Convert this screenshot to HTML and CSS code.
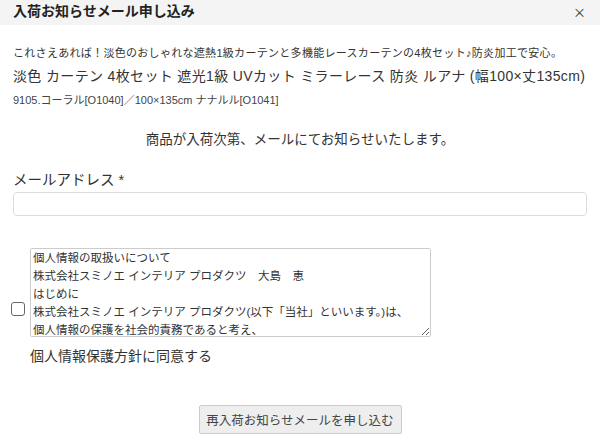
FILE: index.html
```html
<!DOCTYPE html>
<html lang="ja">
<head>
<meta charset="utf-8">
<link rel="stylesheet" href="styles.css">
</head>
<body>
<div class="modal">
  <div class="header">
    <div class="title">入荷お知らせメール申し込み</div>
    <div class="close">×</div>
  </div>
  <div class="body">
    <p class="catch">これさえあれば！淡色のおしゃれな遮熱1級カーテンと多機能レースカーテンの4枚セット♪防炎加工で安心。</p>
    <p class="name">淡色 カーテン 4枚セット 遮光1級 UVカット ミラーレース 防炎 ルアナ (幅100×丈135cm)</p>
    <p class="variant">9105.コーラル[O1040]／100×135cm ナナルル[O1041]</p>
    <p class="notice">商品が入荷次第、メールにてお知らせいたします。</p>
    <label class="label">メールアドレス *</label>
    <input class="input" type="text">
    <div class="agree">
      <input class="check" type="checkbox">
      <textarea class="policy" readonly>個人情報の取扱いについて
株式会社スミノエ インテリア プロダクツ　大島　恵
はじめに
株式会社スミノエ インテリア プロダクツ(以下「当社」といいます。)は、
個人情報の保護を社会的責務であると考え、
個人情報に関する法令およびその他の規範を遵守し、</textarea>
    </div>
    <p class="agree-text">個人情報保護方針に同意する</p>
    <div class="actions">
      <button class="submit" type="button">再入荷お知らせメールを申し込む</button>
    </div>
  </div>
</div>
</body>
</html>
```
FILE: styles.css
```css
* { box-sizing: border-box; }
html, body { margin: 0; padding: 0; background: #fff; }
body {
  font-family: "Liberation Sans", "Noto Sans CJK JP", sans-serif;
  color: #333;
  width: 600px;
  height: 443px;
  overflow: hidden;
}
.header {
  display: flex;
  align-items: center;
  justify-content: space-between;
  height: 25px;
  background: #f4f4f4;
  padding: 0 14px 0 13px;
}
.title {
  font-size: 14px;
  font-weight: bold;
  color: #222;
  line-height: 20px;
  margin-top: -4px;
}
.close {
  font-family: "Noto Sans CJK JP", sans-serif;
  font-size: 13px;
  color: #333;
  margin-top: -3px;
}
.body {
  padding: 0 13px;
}
p { margin: 0; }
.catch {
  font-size: 11px;
  line-height: 16px;
  margin-top: 20px;
  color: #333;
  letter-spacing: 0.3px;
  white-space: nowrap;
}
.name {
  font-size: 14px;
  line-height: 20px;
  margin-top: 5px;
  color: #333;
  white-space: nowrap;
  letter-spacing: 0.35px;
}
.variant {
  font-size: 11px;
  line-height: 16px;
  margin-top: 6px;
  color: #444;
}
.notice {
  text-align: center;
  font-size: 13.5px;
  line-height: 20px;
  margin-top: 22px;
  color: #333;
}
.label {
  display: block;
  font-size: 14.5px;
  line-height: 20px;
  margin-top: 20px;
  color: #333;
}
.input {
  display: block;
  width: 100%;
  height: 24px;
  margin-top: 2px;
  border: 1px solid #ddd;
  border-radius: 4px;
  background: #fff;
}
.agree {
  display: flex;
  align-items: flex-start;
  margin-top: 32px;
  margin-left: -2px;
  gap: 5px;
}
.check {
  appearance: none;
  -webkit-appearance: none;
  width: 14px;
  height: 14px;
  border: 1.5px solid #666;
  border-radius: 3px;
  margin: 0;
  margin-top: 54px;
  background: #fff;
  flex: none;
}
.policy {
  width: 401px;
  height: 89px;
  border: 1px solid #ccc;
  border-radius: 2px;
  font-family: "Liberation Sans", "Noto Sans CJK JP", sans-serif;
  font-size: 11.5px;
  line-height: 18px;
  color: #333;
  padding: 0 2px;
  resize: both;
  overflow-y: scroll;
  white-space: pre;
}
.policy::-webkit-scrollbar {
  width: 9px;
}
.policy::-webkit-scrollbar-track {
  background: #f8f8f8;
  border-left: 1px solid #e6e6e6;
}
.policy::-webkit-scrollbar-thumb {
  background: #c4c4c4;
  border-radius: 4px;
  border: 2px solid #f8f8f8;
  min-height: 14px;
}
.agree-text {
  font-size: 14px;
  line-height: 20px;
  margin-top: 9px;
  margin-left: 17px;
  color: #333;
}
.actions {
  display: flex;
  justify-content: center;
  margin-top: 39px;
}
.submit {
  width: 203px;
  height: 29px;
  background: #eee;
  border: 1px solid #ccc;
  border-radius: 2px;
  font-family: "Liberation Sans", "Noto Sans CJK JP", sans-serif;
  font-size: 12.5px;
  color: #444;
  padding: 0;
}
```
